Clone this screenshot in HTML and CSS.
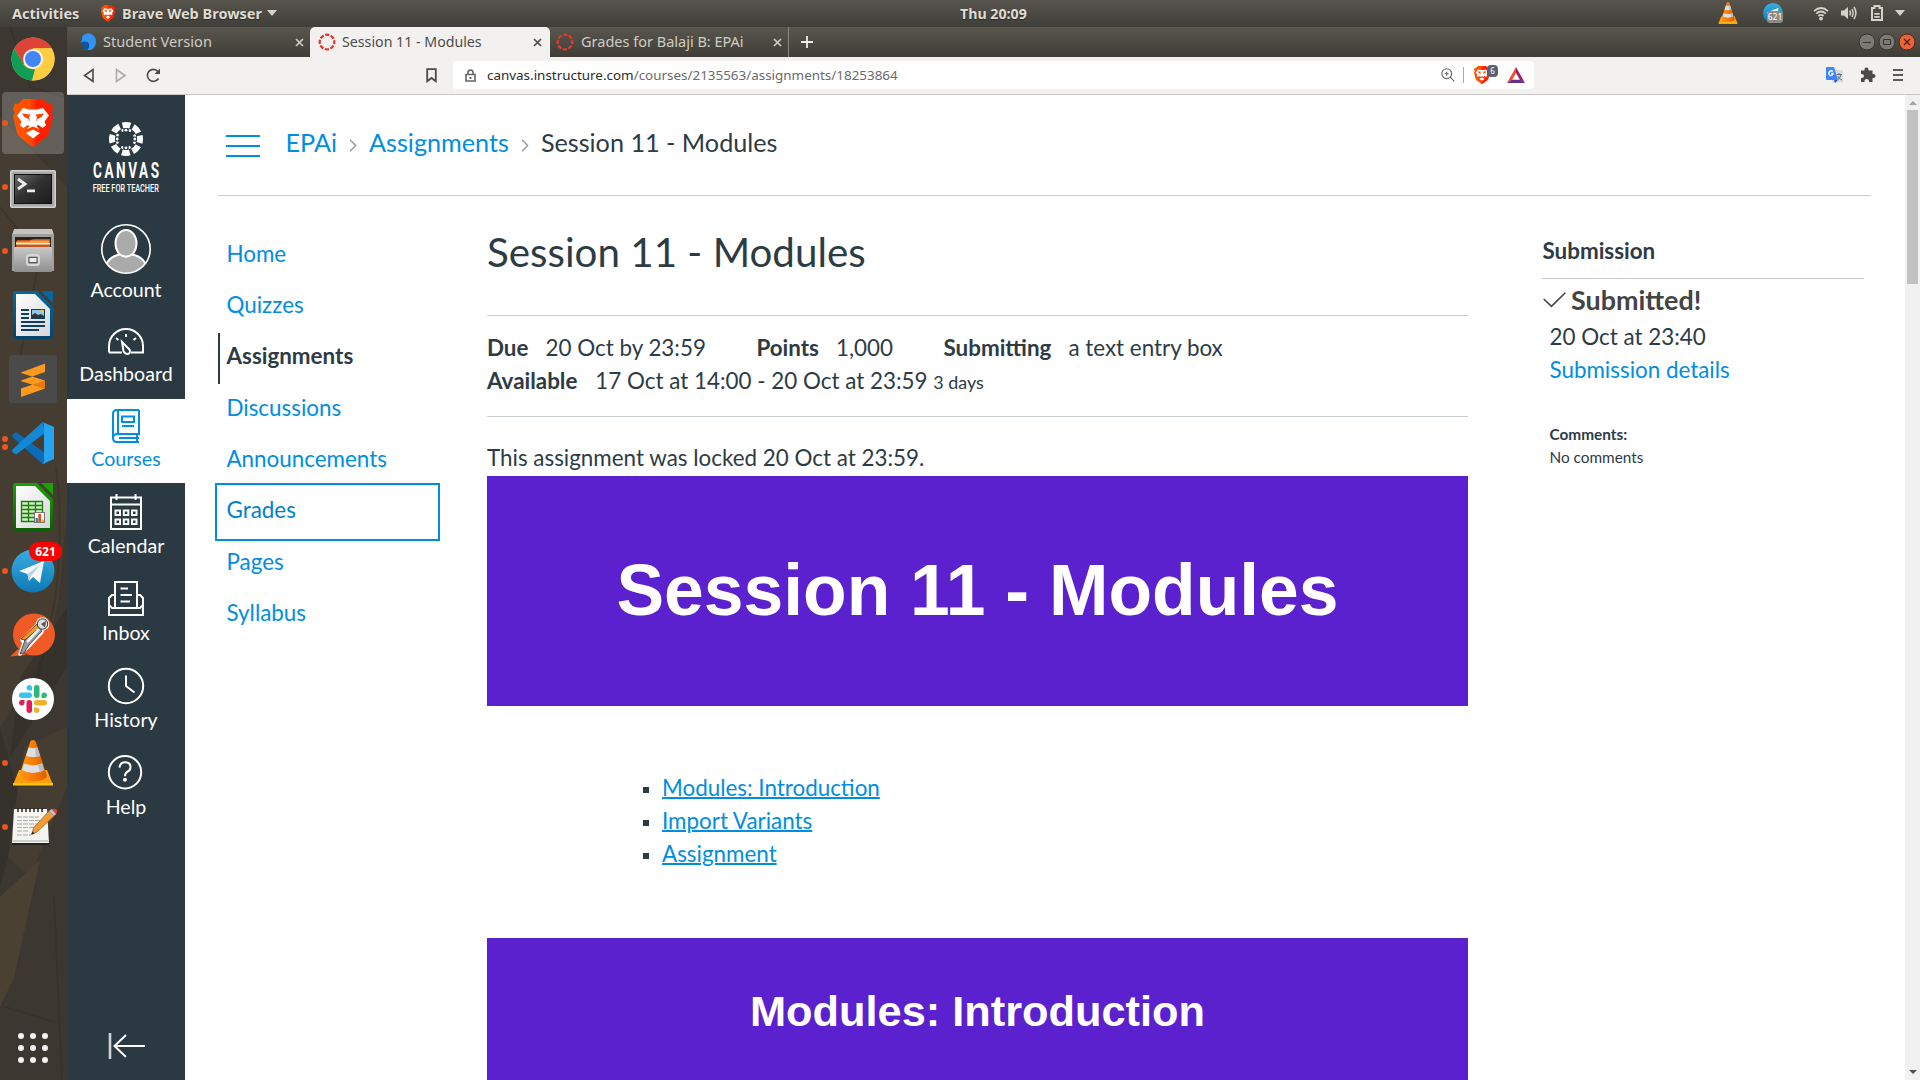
FILE: index.html
```
<!DOCTYPE html>
<html lang="en">
<head>
<meta charset="utf-8">
<title>Session 11 - Modules</title>
<link rel="stylesheet" href="styles.css">
</head>
<body>
<svg width="0" height="0" class="defs" aria-hidden="true">
  <defs>
    <linearGradient id="gBrave" x1="0" x2="1"><stop offset="0" stop-color="#ff5500"/><stop offset=".4" stop-color="#ff5000"/><stop offset=".6" stop-color="#ff2000"/><stop offset="1" stop-color="#ff2000"/></linearGradient>
    <linearGradient id="gTerm" x1="0" y1="0" x2="1" y2="1"><stop offset="0" stop-color="#6a6a6a"/><stop offset=".45" stop-color="#333"/><stop offset="1" stop-color="#1c1c1c"/></linearGradient>
    <linearGradient id="gGrey" x1="0" y1="0" x2="0" y2="1"><stop offset="0" stop-color="#c9c9c9"/><stop offset="1" stop-color="#8f8f8f"/></linearGradient>
    <linearGradient id="gTele" x1="0" y1="0" x2="0" y2="1"><stop offset="0" stop-color="#37aee2"/><stop offset="1" stop-color="#1079b5"/></linearGradient>
    <linearGradient id="gBlue" x1="0" y1="0" x2="0" y2="1"><stop offset="0" stop-color="#0369a3"/><stop offset="1" stop-color="#05436b"/></linearGradient>
    <linearGradient id="gGreen" x1="0" y1="0" x2="0" y2="1"><stop offset="0" stop-color="#18a303"/><stop offset="1" stop-color="#0f5c07"/></linearGradient>
    <linearGradient id="gCone" x1="0" x2="1"><stop offset="0" stop-color="#ff9a1a"/><stop offset=".5" stop-color="#f97c00"/><stop offset="1" stop-color="#d95f00"/></linearGradient>
    <linearGradient id="gPage" x1="0" y1="0" x2="1" y2="1"><stop offset="0" stop-color="#fff"/><stop offset="1" stop-color="#d6d6d6"/></linearGradient>
    <symbol id="brave" viewBox="0 0 40 48">
      <path fill="url(#gBrave)" d="M10 0H30L35 5L38 4.500L40 10L38 14L40 17L36 34Q35 37 32 39L22 47Q20 48.500 18 47L8 39Q5 37 4 34L0 17L2 14L0 10L2 4.500L5 5Z"/>
      <path fill="#fff" d="M10 9L16 10.500H24L30 9L36 16.500L31.500 22.500L33 26.500L29.500 29L25.500 26L23.500 27L26 30H14L16.500 27L14.500 26L10.500 29L7 26.500L8.500 22.500L4 16.500ZM20 30.500L27 34L20 39.500L13 34Z"/>
      <path fill="#ff4000" d="M9 14.500L17.500 15.500L16 18L17 23L15.500 20L11.500 18ZM31 14.500L22.500 15.500L24 18L23 23L24.500 20L28.500 18ZM13 30.500L20 27.500L27 30.500L26 32.500L20 30L14 32.500Z"/>
    </symbol>
    <symbol id="cone" viewBox="0 0 40 46">
      <path fill="#ff9d0a" d="M6 30H34L40 45H0Z"/><path fill="#ffc21a" d="M0 43H40V45.500H0Z"/>
      <path fill="url(#gCone)" d="M17.500 1Q20 -1 22.500 1L34 36Q33 41 20 41Q7 41 6 36Z"/>
      <path fill="#dedfe2" d="M15.600 7.500Q20 9 24.400 7.500L27 16Q20 18 13 16ZM11 23.500Q20 27 29 23.500L31 30Q20 36 9 30Z"/>
      <path fill="#b9bbc0" d="M22 8.300L24.400 7.500L27 16L23 17ZM25 25L29 23.500L31 30L27 32.500Z"/>
    </symbol>
    <symbol id="ring" viewBox="0 0 18 18">
      <circle cx="9" cy="9" r="7.300" fill="none" stroke="#e23a2e" stroke-width="2.300" stroke-dasharray="4.230 1.500" stroke-dashoffset="2.110"/>
    </symbol>
  </defs>
</svg>

<header class="topbar">
  <div class="top-left">
    <span class="activities">Activities</span>
    <svg class="brave-mini" viewBox="0 0 40 48"><use href="#brave"/></svg>
    <span class="app-name">Brave Web Browser</span>
    <i class="caret"></i>
  </div>
  <span class="clock">Thu 20:09</span>
  <div class="top-right">
    <svg width="20" height="22" viewBox="0 0 40 46"><use href="#cone"/></svg>
    <div class="tele-mini">
      <svg width="20" height="20" viewBox="0 0 44 44"><circle cx="22" cy="22" r="22" fill="url(#gTele)"/><path fill="#fff" d="M8 21L34 11L30 34L21 27Z"/></svg>
      <span class="mini-count">621</span>
    </div>
    <svg class="wifi" width="16" height="15" viewBox="0 0 16 15" fill="none" stroke="#d5d2cb" stroke-width="1.700"><path d="M1 5.200Q8-1.200 15 5.200M3.200 7.700Q8 3.300 12.800 7.700M5.300 10Q8 7.600 10.700 10"/><circle cx="8" cy="12.600" r="1.900" fill="#d5d2cb" stroke="none"/></svg>
    <svg class="vol" width="16" height="14" viewBox="0 0 16 14" fill="none" stroke="#d5d2cb" stroke-width="1.500"><path fill="#d5d2cb" stroke="none" d="M0 4.500H3L7 1V13L3 9.500H0Z"/><path d="M8.700 4.500Q10.200 7 8.700 9.500M11 3Q13.200 7 11 11M13 1Q16.800 7 13 13"/></svg>
    <svg class="bat" width="12" height="16" viewBox="0 0 12 16"><path fill="none" stroke="#d5d2cb" stroke-width="2" d="M1 3H3.500V1H8.500V3H11V15H1Z"/><path stroke="#d5d2cb" stroke-width="1.700" d="M3.300 8.800H8.700M3.300 11.800H8.700"/></svg>
    <i class="caret"></i>
  </div>
</header>

<div class="desktop">
  <aside class="dock">
    <svg class="wall" viewBox="0 0 67 1053" preserveAspectRatio="none">
      <path fill="#4a3f33" d="M0 90L67 160V480L60 560Q56 620 0 700Z" opacity=".75"/>
      <path fill="#2e2c28" d="M0 700L22 780L0 860ZM20 650L67 580V640L10 730Z" opacity=".5"/>
      <path fill="#4f4334" d="M0 870L40 833L14 950L0 980Z" opacity=".8"/>
      <path fill="#4b4133" d="M24 720L67 700V760L30 850L8 830Z" opacity=".6"/>
      <path fill="none" stroke="#2a2824" stroke-width="2" opacity=".3" d="M10 0L30 60L64 70M56 440Q66 520 50 600L30 680M54 870L62 1053M5 980L55 995M0 180L40 230L20 330"/>
    </svg>
    <div class="slot"><svg viewBox="0 0 48 48"><circle cx="24" cy="24" r="21.500" fill="#ffcd42"/><path fill="#db4437" d="M5.400 13.200A21.500 21.500 0 0 1 42.600 13.200H24L14.600 29.500Z"/><path fill="#0f9d58" d="M5.400 13.200L14.600 29.500Q19 35 26 34L23 45.500A21.500 21.500 0 0 1 5.400 13.200Z"/><path fill="#ffcd42" d="M42.600 13.200H24L33.400 29.400L23 45.500A21.500 21.500 0 0 0 42.600 13.200Z"/><circle cx="24" cy="24" r="10" fill="#f4f4f4"/><circle cx="24" cy="24" r="8" fill="#4285f4"/></svg></div>
    <div class="slot active"><i class="dot"></i><svg viewBox="0 0 48 48"><svg x="4" y="0" width="40" height="48" viewBox="0 0 40 48"><use href="#brave"/></svg></svg></div>
    <div class="slot"><i class="dot"></i><svg viewBox="0 0 48 48"><rect x="1" y="7" width="46" height="38" rx="2" fill="#d2d2d0"/><rect x="2.500" y="8.500" width="43" height="35" rx="1" fill="#a7a7a5"/><rect x="5" y="11" width="38" height="30" fill="#111"/><rect x="6" y="12" width="36" height="28" fill="url(#gTerm)"/><path fill="none" stroke="#eee" stroke-width="2.800" d="M9 16L16 21L9 26M18 27.800H26"/></svg></div>
    <div class="slot"><i class="dot"></i><svg viewBox="0 0 48 48"><path fill="#c4c4c2" d="M5 2H43L45 8H3Z"/><rect x="3" y="7" width="42" height="37" fill="#a0a09e"/><rect x="6" y="10" width="36" height="10" fill="#2c2320"/><path fill="#c8531b" d="M8 13H22L24 12H41V20H7Z"/><path fill="#f6a44c" d="M7 14.500H20L22 13.500H40V17H7Z"/><path fill="#f4ede4" d="M7 16H41V17.500H7Z"/><rect x="5" y="20" width="38" height="25" rx="1" fill="url(#gGrey)"/><rect x="18" y="28" width="12" height="10" rx="2.500" fill="none" stroke="#d8d8d8" stroke-width="2"/><rect x="20" y="30.500" width="8" height="5" fill="#ececec" stroke="#555"/></svg></div>
    <div class="slot"><svg viewBox="0 0 48 48"><path fill="url(#gBlue)" d="M6 0H28L44 16V45Q44 48 41 48H7Q4 48 4 45V3Q4 0 6 0Z"/><path fill="#0369a3" d="M32 0H44V12Z"/><path fill="url(#gPage)" d="M7 3H26L41 18V45H7Z"/><path stroke="#0b3f66" stroke-width="2" d="M12 19H20M12 23H20M12 27H20M12 31H36M12 35H36M12 39H30"/><rect x="22.500" y="18.500" width="13" height="9" fill="#8fc7ec" stroke="#0b3f66"/><path fill="#333" d="M23 27V24L26 22L29 24L32 23L35 25V27Z"/><circle cx="33" cy="20" r="1.500" fill="#f2cb3b"/></svg></div>
    <div class="slot"><svg viewBox="0 0 48 48"><rect width="48" height="48" rx="3" fill="#4a4a4a"/><path fill="#e87a0c" d="M12 26L36 26V33.500L12 26Z"/><path fill="#ff9a1f" d="M12 17.500L36 8.500V17L12 25.500ZM12 18V26L36 33.500V25.500ZM12 33.500L36 25.500V33.500L12 42Z"/></svg></div>
    <div class="slot"><i class="dot two"></i><svg viewBox="0 0 48 48"><path fill="#0b6db8" d="M3 16L7 13L36 34V45L33.500 45L4 18.500Z"/><path fill="#1389d6" d="M33.500 3L3 31Q2.500 32 3.500 33L7 35.500L36 14Z"/><path fill="#27a4f0" d="M33.500 3L45 8V40L33.500 45Q35 44 35 42V6Q35 4 33.500 3Z"/></svg></div>
    <div class="slot"><svg viewBox="0 0 48 48"><path fill="url(#gGreen)" d="M6 0H28L44 16V45Q44 48 41 48H7Q4 48 4 45V3Q4 0 6 0Z"/><path fill="#18a303" d="M32 0H44V12Z"/><path fill="url(#gPage)" d="M7 3H26L41 18V45H7Z"/><path fill="#cdf0c4" stroke="#18800a" stroke-width="1.300" d="M12.500 18.500H33.500V38.500H12.500ZM12.500 22.500H33.500M12.500 26.500H33.500M12.500 30.500H33.500M12.500 34.500H33.500M19.500 18.500V38.500M26.500 18.500V38.500"/><rect x="25.500" y="29.500" width="10" height="10" fill="#fff" stroke="#777"/><path fill="#2a8bd0" d="M26.500 35H29V39H26.500Z"/><path fill="#d9521a" d="M29.300 31H32V39H29.300Z"/><path fill="#f0b429" d="M32.300 36.500H35V39H32.300Z"/></svg></div>
    <div class="slot"><i class="dot"></i><svg viewBox="0 0 48 48"><circle cx="24" cy="24" r="21.500" fill="url(#gTele)"/><path fill="#f4f8fb" d="M10 24L35 14L31 36L24 30L20 34L18.500 27Z"/><path fill="#b9d3e4" d="M18.500 27L32 17L22 29L20 34Z"/></svg><span class="count">621</span></div>
    <div class="slot"><svg viewBox="0 0 48 48"><path fill="#f15a24" d="M1 45.500L9 38L17 44Z"/><circle cx="25" cy="23.500" r="21" fill="#f15a24"/><g stroke="#fff" stroke-width="3.500" stroke-linejoin="round"><path d="M29 13L13 29L15 32L11 43L19 36L33 21Z"/><circle cx="33.500" cy="13" r="5"/></g><path fill="#999" stroke="#333" stroke-width=".8" d="M29 14L17 27L15 32L11 43L15 42L20 34L33 20Z"/><path fill="#f7931e" stroke="#333" stroke-width=".8" d="M28 13L12 28L16 29L31 16Z"/><path fill="#eee" d="M29 17L17 30L19 32L31 19Z"/><circle cx="33.500" cy="13" r="5.200" fill="#ddd" stroke="#333"/><path fill="#555" d="M37 10L32 13L36 16.500Z"/></svg></div>
    <div class="slot"><svg viewBox="0 0 48 48"><circle cx="24" cy="24" r="21" fill="#fff"/><g fill="#36c5f0"><rect x="10" y="17.500" width="13" height="5.500" rx="2.700"/><path d="M23 15.500V12.800A2.700 2.700 0 1 0 20.300 15.500Z"/></g><g fill="#2eb67d"><rect x="25" y="10" width="5.500" height="13" rx="2.700"/><path d="M32.500 23H35.200A2.700 2.700 0 1 0 32.500 20.300Z"/></g><g fill="#ecb22e"><rect x="25" y="25" width="13" height="5.500" rx="2.700"/><path d="M25 32.500V35.200A2.700 2.700 0 1 0 27.700 32.500Z"/></g><g fill="#e01e5a"><rect x="17.500" y="25" width="5.500" height="13" rx="2.700"/><path d="M15.500 25H12.800A2.700 2.700 0 1 0 15.500 27.700Z"/></g></svg></div>
    <div class="slot"><i class="dot"></i><svg viewBox="0 0 48 48"><svg x="3.500" y="1" width="41" height="46" viewBox="0 0 40 46"><use href="#cone"/></svg></svg></div>
    <div class="slot"><i class="dot"></i><svg viewBox="0 3 48 48"><path fill="#24221f" d="M3 42H40V45H3Z"/><path fill="#f4f4f1" d="M5 9H38L40 43H3Z"/><path fill="#ccd0c8" d="M3.500 40H39.500V42H3.500Z"/><path fill="none" stroke="#222" stroke-width="1.500" d="M9 12V8M13 12V8M17 12V8M21 12V8M25 12V8M29 12V8M33 12V8"/><path stroke="#aaa" stroke-dasharray="5 1" d="M8 17H30M8 20.500H33M8 24H28M8 27.500H26M8 31H20M8 35H22"/><path fill="#f29b38" stroke="#a8621b" stroke-width=".8" d="M40 11L45 16L28 32L23 34L24.500 28Z"/><path fill="#e23838" d="M42 10Q45 7 48 10Q49 13 46 15Z"/><path fill="#b8c2cc" d="M40 11L42.500 9L47 14L45 16Z"/><path fill="#222" d="M22 35L23.500 31.500L25.500 33.500Z"/></svg></div>
    <svg class="apps" viewBox="0 0 30 30" fill="#f4f3f1"><circle cx="3" cy="3" r="3"/><circle cx="15" cy="3" r="3"/><circle cx="27" cy="3" r="3"/><circle cx="3" cy="15" r="3"/><circle cx="15" cy="15" r="3"/><circle cx="27" cy="15" r="3"/><circle cx="3" cy="27" r="3"/><circle cx="15" cy="27" r="3"/><circle cx="27" cy="27" r="3"/></svg>
  </aside>

  <section class="browser">
    <div class="tabs">
      <div class="tab first">
        <svg width="17" height="18" viewBox="0 0 17 18"><path fill="#3294f0" d="M3 4Q6 0 10 .3Q17 2 17 9Q16.500 15 12 17H8Q12 12 9 9.500Q5 7.500 0 10.500Q4 8 3 4Z"/><path fill="#0a56a8" d="M0 17Q6 16 5 12Q4 9.500 0 11Q5 7 8.500 9.500Q12 13 8 17Z"/></svg>
        <span class="t1">Student Version</span>
        <svg class="x" viewBox="0 0 9 9"><path d="M1 1L8 8M8 1L1 8"/></svg>
      </div>
      <div class="tab current">
        <svg width="18" height="18"><use href="#ring"/></svg>
        <span class="t2">Session 11 - Modules</span>
        <svg class="x" viewBox="0 0 9 9"><path d="M1 1L8 8M8 1L1 8"/></svg>
      </div>
      <div class="tab last">
        <svg width="18" height="18"><use href="#ring"/></svg>
        <span class="t3">Grades for Balaji B: EPAi</span>
        <svg class="x" viewBox="0 0 9 9"><path d="M1 1L8 8M8 1L1 8"/></svg>
      </div>
      <svg class="plus" viewBox="0 0 12 12"><path d="M6 0V12M0 6H12"/></svg>
      <div class="winbtns">
        <svg width="18" height="18" viewBox="0 0 18 18"><circle cx="9" cy="9" r="8" fill="#7b7973" stroke="#35332e"/><path d="M5 9.500H13" stroke="#35332e"/></svg>
        <svg width="18" height="18" viewBox="0 0 18 18"><circle cx="9" cy="9" r="8" fill="#7b7973" stroke="#35332e"/><path d="M5.500 6.500H12.500V11.500H5.500Z" fill="none" stroke="#35332e"/></svg>
        <svg width="18" height="18" viewBox="0 0 18 18"><circle cx="9" cy="9" r="8" fill="#ec6237" stroke="#4b2a1d"/><path d="M6 6L12 12M12 6L6 12" stroke="#4b1c0c" stroke-width="1.300"/></svg>
      </div>
    </div>

    <div class="toolbar">
      <svg class="back" width="12" height="15" viewBox="0 0 12 15"><path d="M10 1.500V13.500L1.500 7.500Z"/></svg>
      <svg class="fwd" width="12" height="15" viewBox="0 0 12 15"><path d="M1.500 1.500V13.500L10 7.500Z"/></svg>
      <svg class="reload" width="15" height="15" viewBox="0 0 15 15"><path d="M12.500 10.500A6 6 0 1 1 12 3.500"/><path class="fill" d="M14 .5V6H8.500Z"/></svg>
      <svg class="bookmark" width="11" height="15" viewBox="0 0 11 15"><path d="M1.200 1.200H9.800V13.300L5.500 10L1.200 13.300Z"/></svg>
      <div class="urlbar">
        <svg class="lock" width="11" height="13" viewBox="0 0 11 13"><path d="M1 5.500H10V12H1ZM3 5.500V3.300Q3 1 5.500 1Q8 1 8 3.300V5.500"/><path class="fill" d="M4.500 8H6.500V9.700H4.500Z"/></svg>
        <span class="url"><b>canvas.instructure.com</b>/courses/2135563/assignments/18253864</span>
        <svg class="mag" width="14" height="14" viewBox="0 0 14 14"><circle cx="5.700" cy="5.700" r="4.900"/><path d="M9.200 9.200L13.300 13.300M5.700 3.700V7.700M3.700 5.700H7.700"/></svg>
        <i class="vsep"></i>
        <div class="shield"><svg width="16" height="18" viewBox="0 0 40 48" preserveAspectRatio="none"><use href="#brave"/></svg><span>6</span></div>
        <svg width="18" height="16" viewBox="0 0 18 16"><path fill="#ff4724" d="M9 0L0 16L5 13L9 6Z"/><path fill="#9e1f63" d="M9 0L18 16L13 13L9 6Z"/><path fill="#662d91" d="M0 16H18L13 12.700H5Z"/></svg>
      </div>
      <div class="exts">
        <svg width="17" height="16" viewBox="0 0 17 16"><rect x="6" y="3" width="11" height="12.500" fill="#dcdcdc"/><path stroke="#5a7280" fill="none" d="M10.500 7.500H16M13 6V7.500M15 7.500Q14 11 11.500 13M11.500 9Q13 12 16 13"/><path fill="#4285f4" d="M1 0H8L12 13H1Q0 13 0 12V1Q0 0 1 0Z"/><path fill="#2a56c6" d="M8 13H12L9 16Z"/><path fill="none" stroke="#fff" stroke-width="1.300" d="M7 4.500Q5 3 3.500 4.500Q2 6.500 3.500 8Q5.500 9.500 7 7V6.500H5"/></svg>
        <svg width="16" height="16" viewBox="0 0 16 16"><path fill="#4a4a4a" d="M1 3.500H4.500Q4.200 0.500 6.500 0.500Q8.800 0.500 8.500 3.500H12.500V7Q15.500 6.700 15.500 9Q15.500 11.300 12.500 11V15H9Q9.200 12 6.800 12Q4.300 12 4.500 15H1V11Q4 11.200 4 9Q4 6.800 1 7Z"/></svg>
        <svg width="10" height="12" viewBox="0 0 10 12"><path stroke="#5b5b5b" stroke-width="1.900" d="M0 1H10M0 6H10M0 11H10"/></svg>
      </div>
    </div>

    <div class="page">
      <nav class="gnav">
        <div class="logo">
          <svg width="36" height="36" viewBox="0 0 36 36">
            <circle cx="18" cy="18" r="14" fill="none" stroke="#fff" stroke-width="6" stroke-dasharray="8 2.996" stroke-dashoffset="4"/>
            <circle cx="18" cy="18" r="9.200" fill="none" stroke="#fff" stroke-width="2.800" stroke-linecap="round" stroke-dasharray=".01 7.216" stroke-dashoffset="-3.610"/>
            <g fill="#2b3942"><circle cx="18" cy="9.500" r="2.600"/><circle cx="18" cy="26.500" r="2.600"/><circle cx="9.500" cy="18" r="2.600"/><circle cx="26.500" cy="18" r="2.600"/></g>
            <g fill="#fff"><circle cx="18" cy="9.200" r="1.400"/><circle cx="18" cy="26.800" r="1.400"/><circle cx="9.200" cy="18" r="1.400"/><circle cx="26.800" cy="18" r="1.400"/></g>
          </svg>
          <span class="word">CANVAS</span>
          <span class="tag">FREE FOR TEACHER</span>
        </div>
        <a class="gi top"><svg width="56" height="56" viewBox="0 0 56 56"><defs><clipPath id="av"><circle cx="28" cy="28" r="24"/></clipPath></defs><g clip-path="url(#av)" fill="#aaa"><ellipse cx="28" cy="22.500" rx="10.500" ry="13.500"/><path d="M6 56Q6 36 22 33.500Q28 38 34 33.500Q50 36 50 56Z"/></g><circle cx="28" cy="28" r="24.200" fill="none" stroke="#fff" stroke-width="1.600"/></svg><span>Account</span></a>
        <a class="gi top"><svg viewBox="0 0 40 40"><path d="M3 32.500V26A17 17 0 0 1 37 26V32.500H25M3 32.500H16M20 14V17M10 18L12.500 20M30 18L27.500 20M16 22L23.500 29.500Q25 33 22 34Q18.500 34 17.500 31Z"/></svg><span>Dashboard</span></a>
        <a class="gi on"><svg viewBox="0 0 40 40"><path d="M33 5H11Q7 5 7 9V33Q7 37 11 37H33M33 5V29H11Q7 29.500 7 33M31 29.500V36.500M12 5V29M13 33H33M16 11.500H28V17H16ZM16 21H28"/></svg><span>Courses</span></a>
        <a class="gi"><svg viewBox="0 0 40 40"><path d="M5 5.500H35V37H5ZM5 12.500H35M10.500 2V8M29.500 2V8M9.500 18.500H14V23H9.500ZM17.800 18.500H22.300V23H17.800ZM26 18.500H30.500V23H26ZM9.500 27.500H14V32H9.500ZM17.800 27.500H22.300V32H17.800ZM26 27.500H30.500V32H26Z"/></svg><span>Calendar</span></a>
        <a class="gi"><svg viewBox="0 0 40 40"><path d="M9 29V3H31V29M9 16H6L3 19V36H37V19L34 16H31M3 26L6 29H34L37 26M14.500 9.500H22M14.500 16H26M14.500 22.500H24"/></svg><span>Inbox</span></a>
        <a class="gi"><svg viewBox="0 0 40 40"><circle cx="20" cy="20" r="17.200"/><path d="M20 9.500V20L28.500 26.500"/></svg><span>History</span></a>
        <a class="gi"><svg viewBox="0 0 40 40"><circle cx="19" cy="19.200" r="16.200"/><path d="M13.500 14.700Q14 9.200 19 9.200Q24.500 9.200 24.500 14.200Q24.500 17.200 21.500 18.700Q19 20.200 19 23.200"/><circle cx="19" cy="26.700" r="1" fill="#fff"/></svg><span>Help</span></a>
        <svg class="collapse" width="38" height="26" viewBox="0 0 38 26" fill="none" stroke="#fff"><path stroke-width="2.600" stroke="#ced3d6" d="M2 0V26"/><path stroke-width="2" d="M37 13H7M18 2L6.500 13L18 24"/></svg>
      </nav>

      <main class="content">
        <div class="crumbs">
          <svg class="burger" width="34" height="23" viewBox="0 0 34 23" stroke="#008ee2" stroke-width="2"><path d="M0 1H34M0 11H34M0 21H34"/></svg>
          <a>EPAi</a>
          <svg class="chev" width="8" height="13" viewBox="0 0 8 13"><path d="M1 .8L6.700 6.500L1 12.200"/></svg>
          <a>Assignments</a>
          <svg class="chev" width="8" height="13" viewBox="0 0 8 13"><path d="M1 .8L6.700 6.500L1 12.200"/></svg>
          <span>Session 11 - Modules</span>
        </div>
        <div class="cols">
          <nav class="snav">
            <a>Home</a><a>Quizzes</a><a class="sel">Assignments</a><a>Discussions</a><a>Announcements</a><a class="focus">Grades</a><a>Pages</a><a>Syllabus</a>
          </nav>
          <article class="asg">
            <h1>Session 11 - Modules</h1>
            <div class="meta">
              <div class="row"><div><b>Due</b>20 Oct by 23:59</div><div><b>Points</b>1,000</div><div><b>Submitting</b>a text entry box</div></div>
              <div class="row"><div><b class="av">Available</b>17 Oct at 14:00 - 20 Oct at 23:59 <small>3 days</small></div></div>
            </div>
            <p class="locked">This assignment was locked 20 Oct at 23:59.</p>
            <div class="hero">Session 11 - Modules</div>
            <ul class="toc"><li><a>Modules: Introduction</a></li><li><a>Import Variants</a></li><li><a>Assignment</a></li></ul>
            <div class="hero two">Modules: Introduction</div>
          </article>
          <aside class="sub">
            <h2>Submission</h2>
            <div class="done"><svg width="23" height="16" viewBox="0 0 23 16"><path d="M.7 7L8.500 14.300L22.300 .7"/></svg>Submitted!</div>
            <div class="ind">20 Oct at 23:40</div>
            <div class="ind"><a>Submission details</a></div>
            <div class="cm"><b>Comments:</b><span>No comments</span></div>
          </aside>
        </div>
      </main>
      <div class="scroll"><i class="up"></i><div class="thumb"></div><i class="down"></i></div>
    </div>
  </section>
</div>
</body>
</html>
```
FILE: styles.css
```
* { box-sizing: border-box; }
body { margin: 0; width: 1920px; height: 1080px; overflow: hidden; display: flex; flex-direction: column; background: #fff; font-family: "Noto Sans", sans-serif; }
svg { display: block; flex: none; }
.defs { position: absolute; }

.topbar { height: 27px; flex: none; display: grid; grid-template-columns: 960px auto 1fr; align-items: center; padding-bottom: 1px; background: linear-gradient(#57544d, #403e39); color: #dfdbd2; font-size: 14.500px; font-weight: 700; text-shadow: 0 1px 1px #2a2926; white-space: nowrap; }
.top-left { display: flex; align-items: center; padding-left: 12px; }
.activities { width: 89px; }
.brave-mini { width: 14px; height: 17px; margin-right: 7px; }
.app-name { width: 145px; }
.caret { border: 5px solid transparent; border-top: 6px solid #d5d2cb; border-bottom: 0; }
.clock { font-size: 14.200px; }
.top-right { display: flex; align-items: center; justify-content: flex-end; padding-right: 15px; }
.tele-mini { position: relative; margin-left: 25px; margin-right: 30px; }
.mini-count { position: absolute; left: 4px; top: 8px; width: 16px; height: 12px; border-radius: 3px; background: #8a8a87; color: #fff; font-size: 8.500px; font-weight: 400; line-height: 12px; text-align: center; text-shadow: none; }
.vol { margin-left: 12px; }
.bat { margin: 0 12px 0 14px; }

.desktop { flex: 1; display: flex; min-height: 0; }
.dock { position: relative; width: 67px; flex: none; display: flex; flex-direction: column; background: #3c3831; overflow: hidden; }
.wall { position: absolute; inset: 0; width: 67px; height: 1053px; }
.slot { position: relative; height: 62px; width: 62px; margin: 1px 0 1px 2px; flex: none; border-radius: 4px; display: flex; align-items: center; justify-content: center; }
.slot > svg { width: 48px; height: 48px; }
.slot.active { background: rgba(255,255,255,.2); }
.dot { position: absolute; left: 0; top: 28px; width: 6px; height: 6px; border-radius: 3px; background: #e95420; }
.dot.two { top: 24px; box-shadow: 0 8px 0 #e95420; }
.count { position: absolute; left: 27px; top: 2px; width: 33px; height: 19px; border-radius: 10px; background: #f00; color: #fff; font-weight: 700; font-size: 12px; line-height: 19px; text-align: center; }
.apps { position: relative; width: 30px; height: 30px; margin: auto 0 17px 18px; }

.browser { flex: 1; min-width: 0; display: flex; flex-direction: column; }
.tabs { height: 30px; flex: none; display: flex; align-items: stretch; background: linear-gradient(#59564e, #3f3d37); color: #cfccc4; white-space: nowrap; }
.tab { display: flex; align-items: center; padding: 0 8px 0 8px; }
.tab .x { width: 9px; height: 9px; margin-left: auto; stroke: currentColor; stroke-width: 1.700; fill: none; }
.tab span { margin-left: 7px; padding-bottom: 2px; }
.first { width: 243px; padding-left: 12px; padding-right: 6px; }
.current { width: 240px; background: #f2f1f0; color: #4c4c4c; border-radius: 5px 5px 0 0; }
.last { width: 239px; padding-left: 6px; padding-right: 6px; border-right: 1px solid #8a877f; }
.tab .t1 { font-size: 14.600px; }
.tab .t2 { font-size: 14.200px; margin-left: 6px; }
.tab .t3 { font-size: 14.500px; }
.plus { width: 12px; height: 12px; margin: 9px 0 0 12px; stroke: #eee; stroke-width: 1.800; }
.winbtns { margin-left: auto; padding-right: 4px; display: flex; gap: 2px; align-items: center; }

.toolbar { height: 38px; flex: none; display: flex; align-items: center; background: #f2f1f0; border-bottom: 1px solid #cbc8c5; padding: 0 0 1px 16px; }
.back, .fwd, .reload, .bookmark, .lock, .mag { fill: none; stroke: #4a4a4a; stroke-width: 1.600; }
.fill { fill: #4a4a4a; stroke: none; }
.toolbar .fwd { stroke: #aaa; margin-left: 20px; }
.reload { margin-left: 19px; }
.bookmark { margin-left: 265px; stroke-width: 1.800; }
.urlbar { margin-left: 16px; width: 1081px; height: 28px; border-radius: 4px; background: #fff; display: flex; align-items: center; padding: 0 9px 0 12px; }
.toolbar .lock { stroke: #666; }
.url { margin-left: 11px; padding-bottom: 1px; font-size: 13.430px; color: #6b6b6b; white-space: nowrap; }
.url b { font-weight: 400; color: #2b2b2b; }
.toolbar .mag { margin-left: auto; stroke: #666; stroke-width: 1.100; }
.vsep { width: 1px; height: 16px; background: #aaa; margin: 0 10px 0 8px; }
.shield { position: relative; margin-right: 17px; }
.shield span { position: absolute; left: 13px; top: -1px; width: 11px; height: 12px; border-radius: 4px; background: #5d6073; color: #fff; font-size: 8px; line-height: 12px; text-align: center; }
.exts { margin-left: auto; padding-right: 17px; display: flex; align-items: center; gap: 17px; }

.page { flex: 1; min-height: 0; display: flex; font-family: Lato, sans-serif; color: #2d3b45; font-size: 22.400px; line-height: 33px; }
.page a { color: #008ee2; }
.gnav { width: 118px; flex: none; background: #2b3942; display: flex; flex-direction: column; }
.logo { height: 126px; padding-top: 26px; display: flex; flex-direction: column; align-items: center; color: #fff; font-family: Roboto, sans-serif; white-space: nowrap; }
.word { margin: 3px -2px 0 0; font-size: 21.500px; line-height: 22px; font-weight: 700; letter-spacing: 4px; transform: scaleX(.63); }
.tag { font-size: 11px; line-height: 14px; font-weight: 500; transform: scaleX(.665); }
.gnav .gi { height: 87px; flex: none; display: flex; flex-direction: column; align-items: center; justify-content: flex-end; padding-bottom: 12px; color: #fff; font-size: 19.600px; line-height: 24px; }
.gi svg { fill: none; stroke: currentColor; stroke-width: 2; margin-bottom: 1px; }
.gi svg:not([width]) { width: 40px; height: 40px; margin-bottom: 2px; }
.gnav .gi.top { height: 84px; padding-bottom: 13px; }
.gnav .gi.top:nth-child(2) { height: 94px; }
.gnav .gi.on { height: 84px; background: #fff; color: #008ee2; }
.collapse { margin: auto 0 21px 41px; }

.content { flex: 1; min-width: 0; padding-left: 33px; overflow: hidden; }
.crumbs { width: 1653px; height: 101px; border-bottom: 1px solid #c7cdd1; display: flex; align-items: center; padding: 0 0 5px 8px; font-size: 25.200px; white-space: nowrap; }
.burger { margin: 7px 1px 0 0; }
.crumbs a:first-of-type { margin-left: 24.500px; }
.chev { fill: none; stroke: #8b969e; stroke-width: 1.300; margin: 6px 12px 0 12px; }
.cols { display: flex; }
.snav { width: 219px; padding-top: 34px; flex: none; display: flex; flex-direction: column; }
.snav a { height: 51.300px; padding: 0 0 3px 8.500px; line-height: 48px; }
.snav .sel { color: #2d3b45; font-weight: 700; border-left: 2px solid #2d3b45; padding-left: 6.500px; line-height: 46px; }
.snav .focus { outline: 2px solid #008ee2; outline-offset: 1px; color: #0081cf; }
.asg { width: 981px; margin-left: 50px; flex: none; }
.asg h1 { margin: 0; height: 119px; padding-top: 31px; font-size: 40.320px; line-height: 50px; font-weight: 400; }
.meta { border-top: 1px solid #c7cdd1; border-bottom: 1px solid #c7cdd1; height: 102px; padding-top: 15px; }
.row { display: flex; gap: 50.500px; white-space: nowrap; }
.row b { margin-right: 17px; }
.row .av { margin-right: 18px; }
.row small { font-size: 17.920px; }
.locked { margin: 24px 0 2px; }
.hero { height: 230px; background: #5b21cf; color: #fff; text-align: center; font: 700 71.400px/229px "Liberation Sans", sans-serif; }
.hero.two { font-size: 43.350px; line-height: 50px; padding-top: 48px; }
.toc { list-style: none; margin: 0; padding: 65px 0 68px 156px; }
.toc li { display: flex; align-items: center; gap: 13px; }
.toc li::before { content: ""; width: 6px; height: 6px; margin-top: 5px; background: #2d3b45; }
.toc a { text-decoration: underline; text-decoration-thickness: 2px; }
.sub { width: 322px; margin-left: 74px; flex: none; }
.sub h2 { margin: 0; padding: 38px 0 11px .5px; font-size: 22.400px; line-height: 33px; border-bottom: 1px solid #c7cdd1; }
.done { display: flex; align-items: center; gap: 5px; padding: 1px 0 0 1px; font-size: 26.880px; font-weight: 700; line-height: 40px; color: #444; }
.done svg { fill: none; stroke: #444; stroke-width: 1.600; margin-top: -1px; }
.ind { padding-left: 7.500px; }
.cm { margin-top: 37px; padding-left: 7.500px; display: flex; flex-direction: column; font-size: 15.350px; line-height: 23px; }
.scroll { width: 15px; flex: none; background: #f1f1f1; display: flex; flex-direction: column; align-items: center; }
.up { margin-top: 6px; border: 4px solid transparent; border-bottom: 4px solid #a3a3a3; border-top: 0; }
.thumb { width: 11px; height: 174px; margin-top: 5px; background: #c1c1c1; }
.down { margin: auto 0 6px; border: 4px solid transparent; border-top: 4px solid #505050; border-bottom: 0; }
```
